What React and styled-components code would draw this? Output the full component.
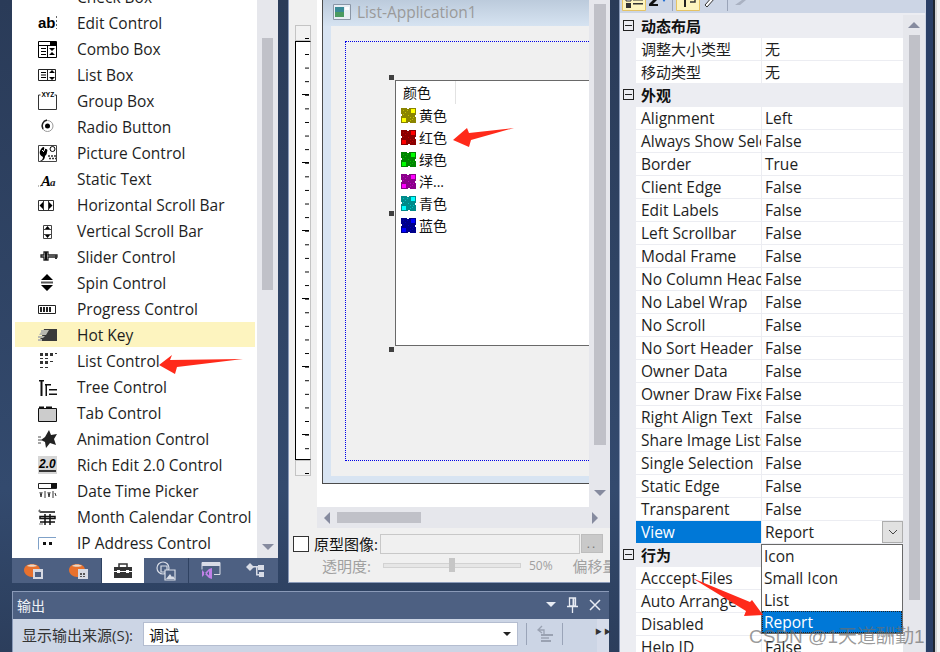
import React from "react";
import styled, { createGlobalStyle } from "styled-components";

const FONT = `"Open Sans", "Noto Sans CJK SC", sans-serif`;

const GlobalStyle = createGlobalStyle`
  html, body {
    margin: 0;
    padding: 0;
    background: #2b3c5a;
  }
  * {
    box-sizing: border-box;
  }
`;

const Page = styled.div`
  position: relative;
  display: flex;
  width: 940px;
  height: 652px;
  overflow: hidden;
  padding-left: 12px;
  font-family: ${FONT};
  font-size: 15.5px;
  color: #1e1e1e;
  background: linear-gradient(180deg, #2a3b58 0%, #334a6e 75%, #2c3e5c 100%);
`;

const MainCol = styled.div`
  display: flex;
  flex-direction: column;
  width: 598px;
  flex: none;
`;

const TopRow = styled.div`
  display: flex;
  gap: 10px;
  height: 583px;
  flex: none;
`;

/* toolbox */
const Toolbox = styled.div`
  display: flex;
  flex-direction: column;
  width: 266px;
  flex: none;
`;

const ToolArea = styled.div`
  display: flex;
  height: 558px;
  flex: none;
  background: #fff;
  overflow: hidden;
`;

const ToolList = styled.div`
  width: 245px;
  flex: none;
  margin-top: -16px;
`;

const ToolRow = styled.div`
  display: flex;
  align-items: center;
  height: 26px;
  margin-left: 3px;
  margin-right: 2px;
  padding-left: 23px;
  background: ${(p) => (p.$hot ? "#fdf4bf" : "transparent")};
  border-bottom: 1px solid ${(p) => (p.$hot ? "#fff" : "transparent")};
`;

const ToolLabel = styled.span`
  margin-left: 19px;
  margin-top: 1px;
  white-space: nowrap;
`;

const ScrollTrack = styled.div`
  display: flex;
  flex-direction: column;
  align-items: center;
  width: ${(p) => p.$w || 21}px;
  flex: none;
  background: #e6e7ec;
`;

const ToolThumb = styled.div`
  width: 11px;
  height: 252px;
  margin-top: 38px;
  background: #c0c1c8;
`;

const ArrowDown = styled.div`
  width: 0;
  height: 0;
  margin-top: ${(p) => p.$top}px;
  border-left: 6px solid transparent;
  border-right: 6px solid transparent;
  border-top: 6px solid #868b9f;
`;

const ArrowUp = styled.div`
  width: 0;
  height: 0;
  margin-top: ${(p) => p.$top}px;
  border-left: 6px solid transparent;
  border-right: 6px solid transparent;
  border-bottom: 6px solid #868b9f;
`;

const TabStrip = styled.div`
  display: flex;
  height: 25px;
  flex: none;
  background: #4d6082;
`;

const Tab = styled.div`
  display: flex;
  align-items: center;
  justify-content: center;
  width: ${(p) => p.$w}px;
  flex: none;
  background: ${(p) => (p.$active ? "#fff" : "transparent")};
  border-right: 1px solid ${(p) => (p.$line ? "#2f4262" : "transparent")};
`;

/* dialog editor */
const Editor = styled.div`
  display: flex;
  flex-direction: column;
  width: 322px;
  flex: none;
  background: #f0f0f0;
  border-left: 1px solid #8a9ab8;
  border-bottom: 1px solid #8a9ab8;
`;

const EditorBody = styled.div`
  display: flex;
  height: 507px;
  flex: none;
`;

const RulerWrap = styled.div`
  display: flex;
  flex-direction: column;
  width: 28px;
  flex: none;
  padding: 25px 6px 0 6px;
`;

const RulerEnd = styled.div`
  height: 16px;
  flex: none;
  background-color: #f2f2f2;
  background-image: linear-gradient(#000, #000);
  background-size: 4px 1px;
  background-position: 9px 12px;
  background-repeat: no-repeat;
  border: 1px solid #c4c4c4;
`;

const RulerTrack = styled.div`
  height: 419px;
  flex: none;
  background-color: #fff;
  background-image: linear-gradient(#000, #000 1px, transparent 1px),
    linear-gradient(#000, #000 1px, transparent 1px);
  background-size: 4px 13.6px, 7px 68px;
  background-position: 9px 12px, 6px 52px;
  background-repeat: repeat-y;
  border: 1px solid #000;
  border-right-color: #c4c4c4;
`;

const Canvas = styled.div`
  flex: 1;
  min-width: 0;
  overflow: hidden;
  background: #fff;
`;

const DialogFrame = styled.div`
  width: 340px;
  height: 484px;
  margin-left: 5px;
  border: 1px solid #4b4b4b;
  border-top: none;
  background: #d8e4f2;
`;

const DialogTitle = styled.div`
  display: flex;
  align-items: center;
  gap: 6px;
  height: 26px;
  padding: 0 0 3px 10px;
  background: linear-gradient(180deg, #bccbdc 0%, #d6e3f1 100%);
  color: #9a9a9a;
`;

const DialogClient = styled.div`
  height: 450px;
  margin-left: 8px;
  padding: 15px 0 0 14px;
  background: #f0f0f0;
`;

const GuideBox = styled.div`
  height: 420px;
  padding: 38px 0 0 49px;
  border: 1px dotted #0000e6;
  border-right: none;
`;

const ListCtl = styled.div`
  position: relative;
  width: 300px;
  height: 266px;
  background: #fff;
  border: 1px solid #696969;
`;

const Handle = styled.span`
  position: absolute;
  left: -7px;
  top: ${(p) => p.$top}px;
  width: 5px;
  height: 5px;
  background: #404040;
`;

const ListHead = styled.div`
  width: 60px;
  height: 23px;
  padding: 1px 0 0 7px;
  line-height: 22px;
  color: #111;
  font-size: 14px;
  border-right: 1px solid #e2e2e2;
`;

const ListItem = styled.div`
  display: flex;
  align-items: center;
  gap: 3px;
  height: 22px;
  padding-left: 4px;
  color: #111;
  font-size: 14px;
`;

const EditorV = styled(ScrollTrack)`
  width: 21px;
`;

const EditorThumb = styled.div`
  width: 12px;
  height: 441px;
  margin-top: 4px;
  background: #c0c1c8;
`;

const HBar = styled.div`
  display: flex;
  align-items: center;
  height: 21px;
  flex: none;
  margin-left: 28px;
  padding: 0 12px 0 7px;
  background: #e6e7ec;
`;

const ArrowLeft = styled.div`
  width: 0;
  height: 0;
  border-top: 6px solid transparent;
  border-bottom: 6px solid transparent;
  border-right: 6px solid #868b9f;
`;

const ArrowRight = styled.div`
  width: 0;
  height: 0;
  margin-left: auto;
  border-top: 6px solid transparent;
  border-bottom: 6px solid transparent;
  border-left: 6px solid #868b9f;
`;

const HThumb = styled.div`
  width: 84px;
  height: 11px;
  margin-left: 7px;
  background: #c0c1c8;
`;

const ProtoRow = styled.div`
  display: flex;
  align-items: center;
  height: 21px;
  margin-top: 5px;
  padding-left: 4px;
  color: #111;
  font-size: 15px;
`;

const Check = styled.span`
  width: 16px;
  height: 16px;
  flex: none;
  margin-right: 5px;
  background: #fff;
  border: 1px solid #333;
`;

const ProtoInput = styled.div`
  width: 200px;
  height: 20px;
  flex: none;
  margin-left: 2px;
  background: #f0f0f0;
  border: 1px solid #c8c8c8;
`;

const ProtoBtn = styled.div`
  width: 22px;
  height: 19px;
  flex: none;
  margin-left: 1px;
  text-align: center;
  line-height: 18px;
  color: #777;
  font-size: 12px;
  letter-spacing: 2px;
  background: #c9c9c9;
  border: 1px solid #bdbdbd;
`;

const OpacityRow = styled.div`
  display: flex;
  align-items: center;
  height: 24px;
  margin-top: -1px;
  padding-left: 33px;
  overflow: hidden;
  white-space: nowrap;
  color: #a0a0a0;
  font-size: 15px;
`;

const Slider = styled.div`
  position: relative;
  width: 138px;
  height: 5px;
  flex: none;
  margin: 0 8px 0 12px;
  background: #e6e6e6;
  border: 1px solid #d2d2d2;
`;

const SliderKnob = styled.span`
  position: absolute;
  left: 65px;
  top: -6px;
  width: 6px;
  height: 14px;
  background: #c6c6c6;
`;

const Percent = styled.span`
  font-size: 12px;
`;

const OffsetLabel = styled.span`
  margin-left: 20px;
`;

/* output */
const Output = styled.div`
  display: flex;
  flex-direction: column;
  height: 61px;
  margin: 8px 1px 0 0;
  flex: none;
  border-top: 1px solid #8a9ab8;
  border-left: 1px solid #8a9ab8;
`;

const OutputTitle = styled.div`
  display: flex;
  align-items: center;
  height: 27px;
  flex: none;
  padding: 0 8px 2px 4px;
  color: #f0f3f8;
  font-size: 14px;
  background: #4d6082;
`;

const TitleIcons = styled.div`
  display: flex;
  align-items: center;
  gap: 11px;
  margin-left: auto;
`;

const OutputBar = styled.div`
  display: flex;
  align-items: center;
  flex: 1;
  padding: 0 0 3px 9px;
  color: #333;
  font-size: 15px;
  background: #ccd5e5;
`;

const OutLabel = styled.span`
  width: 121px;
  flex: none;
  white-space: nowrap;
`;

const OutSelect = styled.div`
  display: flex;
  align-items: center;
  justify-content: space-between;
  width: 375px;
  height: 24px;
  flex: none;
  padding: 0 5px;
  color: #111;
  background: #fff;
  border: 1px solid #b4bdd0;
`;

const SmallCaret = styled.span`
  width: 0;
  height: 0;
  margin-right: 1px;
  border-left: 4px solid transparent;
  border-right: 4px solid transparent;
  border-top: 4px solid #222;
`;

const BarSep = styled.span`
  width: 1px;
  height: 22px;
  flex: none;
  margin-left: ${(p) => p.$left}px;
  background: #9aa4b8;
`;

const Grip = styled.div`
  display: flex;
  justify-content: center;
  gap: 2px;
  width: 12px;
  align-self: stretch;
  flex: none;
  margin: 0 0 -3px auto;
  padding-top: 7px;
  color: #333;
  font-size: 7px;
  background: #d6dcea;
`;

/* properties */
const Props = styled.div`
  display: flex;
  flex-direction: column;
  width: 306px;
  flex: none;
  margin-left: 9px;
  border-left: 1px solid #8a9ab8;
  background: #ecedf2;
`;

const PropsBar = styled.div`
  display: flex;
  align-items: flex-end;
  height: 13px;
  flex: none;
  margin-bottom: 2px;
  padding-bottom: 2px;
  overflow: hidden;
  background: #ccd5e5;
`;

const PropsBody = styled.div`
  display: flex;
  flex: 1;
  min-height: 0;
`;

const PropsGrid = styled.div`
  position: relative;
  width: 283px;
  flex: none;
`;

const CatRow = styled.div`
  display: flex;
  align-items: center;
  height: 23px;
  padding: 0 0 3px 3px;
  color: #111;
  font-weight: 700;
  font-size: 15px;
`;

const Expander = styled.span`
  position: relative;
  width: 11px;
  height: 11px;
  flex: none;
  margin-right: 7px;
  border: 1px solid #222;
  &::after {
    content: "";
    position: absolute;
    left: 1px;
    right: 1px;
    top: 4px;
    height: 1px;
    background: #222;
  }
`;

const PropRow = styled.div`
  display: flex;
  height: 23px;
  padding: 0 0 1px 16px;
  white-space: nowrap;
  font-size: ${(p) => (p.$cn ? "15px" : "inherit")};
`;

const PropName = styled.div`
  width: 125px;
  flex: none;
  overflow: hidden;
  padding-left: 5px;
  line-height: 22px;
  color: ${(p) => (p.$selected ? "#fff" : "#1e1e1e")};
  background: ${(p) => (p.$selected ? "#0078d7" : "#fff")};
`;

const PropValue = styled.div`
  display: flex;
  justify-content: space-between;
  flex: 1;
  margin-left: 1px;
  padding-left: 3px;
  line-height: 22px;
  background: #fff;
`;

const ComboBtn = styled.div`
  display: flex;
  align-items: center;
  justify-content: center;
  width: 21px;
  height: 22px;
  flex: none;
  background: #e1e1e1;
  border: 1px solid #adadad;
`;

const Dropdown = styled.div`
  position: absolute;
  left: 141px;
  top: 529px;
  width: 142px;
  height: 90px;
  background: #fff;
  border: 1px solid #696969;
`;

const DropItem = styled.div`
  height: 22px;
  padding-left: 2px;
  line-height: 22px;
  color: ${(p) => (p.$selected ? "#fff" : "#1e1e1e")};
  background: ${(p) => (p.$selected ? "#0078d7" : "#fff")};
  outline: ${(p) => (p.$selected ? "1px dotted #222" : "none")};
  outline-offset: -1px;
`;

const PropScroll = styled(ScrollTrack)`
  width: 22px;
`;

const PropThumb = styled.div`
  width: 11px;
  height: 565px;
  margin-top: 7px;
  background: #c0c1c8;
`;

const RightEdge = styled.div`
  display: flex;
  width: 15px;
  flex: none;
`;

const EdgeBand = styled.div`
  width: ${(p) => p.$w}px;
  flex: none;
  background: ${(p) => p.$c};
`;

const Overlay = styled.svg`
  position: absolute;
  left: 0;
  top: 0;
  pointer-events: none;
`;

const Watermark = styled.div`
  position: absolute;
  left: 749px;
  top: 621px;
  white-space: nowrap;
  color: rgba(110, 110, 110, 0.7);
  font-family: "Liberation Sans", "Noto Sans CJK SC", sans-serif;
  font-size: 19px;
`;

/* small black toolbox glyphs, 20x20 */
const glyphs = {
  check: (
    <path d="M3 0h14v5h-14z M5 0l3 3M15 0l-3 3" fill="#444" stroke="#000" />
  ),
  edit: (
    <>
      <text x="0" y="15" fontFamily="Liberation Sans" fontWeight="700" fontSize="15" fill="#000">ab</text>
      <path d="M18.5 3v13" stroke="#666" strokeDasharray="2 2" />
    </>
  ),
  combo: (
    <>
      <path d="M.5 2.5h18v16h-18zM.5 6.5h18M9.5 6.5v12M12.5 2.5v4" fill="none" stroke="#000" />
      <path d="M13 3h5v3h-5zM3 9h5v1H3zM3 12h5v1H3zM3 15h5v1H3zM11 9h6l-3 3zM11 16h6l-3-3z" fill="#000" />
    </>
  ),
  listbox: (
    <>
      <path d="M.5 4.5h17v11H.5zM9.5 4.5v11" fill="none" stroke="#222" />
      <path d="M3 7h5v1H3zM3 9.500h5v1H3zM3 12h5v1H3zM11 8h6l-3-3zM11 12h6l-3 3z" fill="#000" />
    </>
  ),
  group: (
    <>
      <path d="M.5 4v14.500h18V4M.5 4h2M16.500 4h2" fill="none" stroke="#333" />
      <text x="3.500" y="6" fontFamily="Liberation Sans" fontWeight="700" fontSize="6.500" fill="#000">XYZ</text>
    </>
  ),
  radio: (
    <>
      <circle cx="9.500" cy="9" r="5.500" fill="none" stroke="#999" />
      <path d="M5 12a6 6 0 0 1 4-9" fill="none" stroke="#222" strokeWidth="1.500" />
      <circle cx="9.500" cy="9" r="2.500" fill="#000" />
    </>
  ),
  picture: (
    <>
      <path d="M.5 2.500h18v16H.5z" fill="#fff" stroke="#444" />
      <path d="M2 18c2-1 3-2 3-4-2-1-4-3-3-6 1-2 2-4 4-4 0 1 1 2 2 2s2 1 1 3c0 2-1 3-2 4 0 3-2 5-5 5z" fill="#000" />
      <path d="M4 7l2 2M7 5l-1 3" stroke="#fff" />
      <circle cx="14.500" cy="6" r="2.500" fill="none" stroke="#000" />
      <path d="M10 13h8M11 15.500h7" stroke="#333" strokeWidth="1.500" strokeDasharray="2 1" />
    </>
  ),
  statictext: (
    <>
      <path d="M0 17h4" stroke="#777" strokeDasharray="1 1" />
      <text x="3" y="17" fontFamily="Liberation Serif" fontWeight="700" fontStyle="italic" fontSize="15" fill="#000">A</text>
      <text x="12" y="17" fontFamily="Liberation Serif" fontWeight="700" fontStyle="italic" fontSize="11" fill="#222">a</text>
    </>
  ),
  hscroll: (
    <>
      <path d="M.5 5.500h15v10H.5zM5.500 5.500v10M10.500 5.500v10" fill="none" stroke="#333" />
      <path d="M5 7v7L1.500 10.500zM11 7v7l3.500-3.500z" fill="#000" />
    </>
  ),
  vscroll: (
    <>
      <path d="M5.500 4.500h8v13h-8zM5.500 8.500h8M5.500 13.500h8" fill="none" stroke="#444" />
      <path d="M7 8h5L9.500 5zM7 14h5l-2.500 3z" fill="#000" />
    </>
  ),
  slider: (
    <>
      <path d="M3 8h3V5h4v3h9v2h-9v3H6v-3H3z" fill="#fff" stroke="#222" strokeWidth="1.300" />
      <path d="M7 5h2v8H7z" fill="#111" />
      <path d="M17 8h2v4h-2z" fill="#333" />
    </>
  ),
  spin: (
    <>
      <path d="M3 7l6-6 6 6zM3 12l6 6 6-6z" fill="#000" />
      <path d="M3 8.500h12v2H3z" fill="#555" />
    </>
  ),
  progress: (
    <>
      <path d="M.5 6.500h17v8H.5z" fill="#fff" stroke="#222" />
      <path d="M2 8h2v5H2zM5 8h2v5H5zM8 8h2v5H8zM11 8h2v5h-2z" fill="#222" />
    </>
  ),
  hotkey: (
    <>
      <path d="M6 4h13v12H1l3-5z" fill="#3a3a3a" />
      <path d="M3 5h8l-3 5H1l2-3zM0 11h7l-2 2H0zM0 14h4v2H0z" fill="#b8b8b0" />
    </>
  ),
  listctl: (
    <path d="M2 2h3v3H2zM7 2h3v3H7zM12 2h3v3h-3zM17 2h2v1h-2zM2 7h3v1H2zM7 7h3v1H7zM2 10h3v3H2zM7 10h3v3H7zM12 10h3v1h-3zM2 16h3v1H2zM7 16h3v1H7z" fill="#333" />
  ),
  tree: (
    <>
      <path d="M1 3h5v1.500H1zM2.500 4h2v15h-2zM7 7h6v1.500H7zM7.500 8h1.500v11H7.500z" fill="#111" />
      <path d="M11 12h8v1.500h-8zM11 16.500h8V18h-8z" fill="#111" />
    </>
  ),
  tab: (
    <>
      <path d="M.5 5.500h18v13H.5z" fill="#ccc" stroke="#111" />
      <path d="M1 3.500h5v2H1zM8 3.500h6v2H8z" fill="#111" />
    </>
  ),
  anim: (
    <>
      <path d="M11 1l2 5 6-1-3 5 2 6-6-2-4 5-1-6-4-2 4-3z" fill="#222" />
      <path d="M0 8h3M0 11h4M0 14h3" stroke="#888" strokeWidth="1.300" />
    </>
  ),
  rich: (
    <>
      <path d="M0 1h19v18H0z" fill="#d6d6d6" />
      <text x="1" y="13" fontFamily="Liberation Sans" fontWeight="700" fontStyle="italic" fontSize="12" fill="#000">2.0</text>
      <path d="M1 16h17" stroke="#000" strokeWidth="1.500" />
    </>
  ),
  date: (
    <>
      <path d="M.5 2.500h18v5H.5z" fill="#fff" stroke="#222" />
      <path d="M13 2h6v5h-6z" fill="#111" />
      <path d="M2 11l1 5 1-5M7 10v7M10 11l1 5 1-5M15 10v7M17 12l1 3" fill="none" stroke="#333" />
    </>
  ),
  month: (
    <>
      <path d="M2 5h15M2 9.500h15v2H2zM2 15h15M7 7v11M12 7v11" fill="none" stroke="#111" strokeWidth="1.500" />
      <path d="M1 3h1v2H1zM1 17h4" stroke="#777" />
    </>
  ),
  ip: (
    <>
      <path d="M.5 4.500H18M.5 4.500v12" fill="none" stroke="#7fa1c8" />
      <path d="M5 9h3v3H5zM11 9h3v3h-3z" fill="#111" />
    </>
  ),
};

const TOOLS = [
  ["check", "Check Box"],
  ["edit", "Edit Control"],
  ["combo", "Combo Box"],
  ["listbox", "List Box"],
  ["group", "Group Box"],
  ["radio", "Radio Button"],
  ["picture", "Picture Control"],
  ["statictext", "Static Text"],
  ["hscroll", "Horizontal Scroll Bar"],
  ["vscroll", "Vertical Scroll Bar"],
  ["slider", "Slider Control"],
  ["spin", "Spin Control"],
  ["progress", "Progress Control"],
  ["hotkey", "Hot Key"],
  ["listctl", "List Control"],
  ["tree", "Tree Control"],
  ["tab", "Tab Control"],
  ["anim", "Animation Control"],
  ["rich", "Rich Edit 2.0 Control"],
  ["date", "Date Time Picker"],
  ["month", "Month Calendar Control"],
  ["ip", "IP Address Control"],
];

function Tomato({ children }) {
  return (
    <svg width="22" height="20" viewBox="0 0 22 20">
      <path d="M1 9c0-4 4-6 8-6 4 0 8 2 8 6 0 5-4 7-8 7-4 0-8-3-8-7z" fill="#e8712d" />
      <path d="M4 5c2-2 8-2 10 0-2 1-8 1-10 0z" fill="#e8d8c8" />
      <path d="M10 8h10v10H10z" fill="#d6d9e2" />
      {children}
    </svg>
  );
}

function ColorIcon({ dark, light }) {
  return (
    <svg width="16" height="16" viewBox="0 0 16 16" shapeRendering="crispEdges">
      <rect x="1" y="1" width="15" height="15" fill={dark} />
      <rect x="7" y="1" width="2" height="1" fill="#fff" />
      <rect x="1" y="7" width="1" height="2" fill="#fff" />
      <rect x="15" y="8" width="1" height="2" fill="#fff" />
      <rect x="8" y="15" width="2" height="1" fill="#fff" />
      <rect x="11" y="2" width="4" height="4" fill={light} />
      <rect x="2" y="11" width="4" height="4" fill={light} />
      <path d="M3 3h1v1H3zM5 5h1v1H5zM7 3h1v1H7zM3 7h1v1H3zM8 8h1v1H8zM10 10h1v1h-1zM12 12h1v1h-1zM10 13h1v1h-1zM13 10h1v1h-1z" fill={light} opacity="0.45" />
    </svg>
  );
}

const ROWS = [
  ["黄色", "#8a8400", "#ffff00"],
  ["红色", "#8a0000", "#ff0000"],
  ["绿色", "#008400", "#00ff00"],
  ["洋...", "#8a008a", "#ff00ff"],
  ["青色", "#008a8a", "#00ffff"],
  ["蓝色", "#00008a", "#0000ff"],
];

const LOOK = [
  ["Alignment", "Left"],
  ["Always Show Selection", "False"],
  ["Border", "True"],
  ["Client Edge", "False"],
  ["Edit Labels", "False"],
  ["Left Scrollbar", "False"],
  ["Modal Frame", "False"],
  ["No Column Header", "False"],
  ["No Label Wrap", "False"],
  ["No Scroll", "False"],
  ["No Sort Header", "False"],
  ["Owner Data", "False"],
  ["Owner Draw Fixed", "False"],
  ["Right Align Text", "False"],
  ["Share Image Lists", "False"],
  ["Single Selection", "False"],
  ["Static Edge", "False"],
  ["Transparent", "False"],
];

// the values of the middle rows sit behind the open dropdown
const ACTIONS = [
  ["Acccept Files", ""],
  ["Auto Arrange", ""],
  ["Disabled", ""],
  ["Help ID", "False"],
];

export default function App() {
  return (
    <Page>
      <GlobalStyle />
      <MainCol>
        <TopRow>
          <Toolbox>
            <ToolArea>
              <ToolList>
                {TOOLS.map(([id, label]) => (
                  <ToolRow key={id} $hot={id === "hotkey"}>
                    <svg width="20" height="20" viewBox="0 0 20 20">{glyphs[id]}</svg>
                    <ToolLabel>{label}</ToolLabel>
                  </ToolRow>
                ))}
              </ToolList>
              <ScrollTrack>
                <ToolThumb />
                <ArrowDown $top={254} />
              </ScrollTrack>
            </ToolArea>
            <TabStrip>
              <Tab $w={45}>
                <Tomato><path d="M12 11h6v5h-6z" fill="#4d6082" /></Tomato>
              </Tab>
              <Tab $w={45} $line>
                <Tomato><path d="M12 12h2v2h-2zM15 12h2v2h-2zM12 15h2v1h-2zM15 15h2v1h-2z" fill="#555" /></Tomato>
              </Tab>
              <Tab $w={42} $active>
                <svg width="20" height="16" viewBox="0 0 20 16">
                  <path d="M6 4V1h8v3" fill="none" stroke="#333" strokeWidth="1.500" />
                  <path d="M1 4h18v4H1zM1 9h18v6H1z" fill="#333" />
                  <path d="M4 7h3v3H4zM13 7h3v3h-3z" fill="#fff" />
                </svg>
              </Tab>
              <Tab $w={45} $line>
                <svg width="20" height="20" viewBox="0 0 20 20" fill="none" stroke="#d8dce6" strokeWidth="1.200">
                  <circle cx="7" cy="7" r="6" />
                  <path d="M5 5h6v6H5z" />
                  <path d="M9 9h10v10H9z" fill="#4d6082" />
                  <path d="M10 18l4-5 2 3 1-1 2 3z" fill="#d8dce6" stroke="none" />
                </svg>
              </Tab>
              <Tab $w={44}>
                <svg width="20" height="18" viewBox="0 0 20 18">
                  <path d="M1 .500h18v12h-6M1 .500v7" fill="none" stroke="#d8dce6" />
                  <path d="M1 1h18v3H1z" fill="#d8dce6" />
                  <path d="M1 8l3 3 4-4 3-1v11l-3-1-4-4-3 3zM3 10l2 1.500L3 13zM8 9l-2 2.500 2 2z" fill="#c080e8" fillRule="evenodd" />
                </svg>
              </Tab>
              <Tab $w={45}>
                <svg width="20" height="18" viewBox="0 0 20 18" fill="#d8dce6">
                  <path d="M5 1l4 4-4 4-4-4z" />
                  <path d="M8 4h5v1.500H8zM11 4h1.500v9H11zM11 12h3v1.500h-3z" />
                  <path d="M13 3h6v5h-6zM14 10h5v5h-5z" />
                </svg>
              </Tab>
            </TabStrip>
          </Toolbox>

          <Editor>
            <EditorBody>
              <RulerWrap>
                <RulerEnd />
                <RulerTrack />
                <RulerEnd />
              </RulerWrap>
              <Canvas>
                <DialogFrame>
                  <DialogTitle>
                    <svg width="18" height="16" viewBox="0 0 18 16">
                      <path d="M.500 .500h17v15H.500z" fill="#e8eef4" stroke="#8a96a6" />
                      <path d="M2 3h9v10H2z" fill="#3a8a96" />
                      <path d="M2 8h9v5H2z" fill="#4a9a60" />
                      <path d="M12 3h4v3h-4z" fill="#fff" />
                    </svg>
                    List-Application1
                  </DialogTitle>
                  <DialogClient>
                    <GuideBox>
                      <ListCtl>
                        <Handle $top={-6} />
                        <Handle $top={130} />
                        <Handle $top={266} />
                        <ListHead>颜色</ListHead>
                        {ROWS.map(([name, dark, light]) => (
                          <ListItem key={name}>
                            <ColorIcon dark={dark} light={light} />
                            {name}
                          </ListItem>
                        ))}
                      </ListCtl>
                    </GuideBox>
                  </DialogClient>
                </DialogFrame>
              </Canvas>
              <EditorV>
                <EditorThumb />
                <ArrowDown $top={45} />
              </EditorV>
            </EditorBody>
            <HBar>
              <ArrowLeft />
              <HThumb />
              <ArrowRight />
            </HBar>
            <ProtoRow>
              <Check />
              原型图像:
              <ProtoInput />
              <ProtoBtn>..</ProtoBtn>
            </ProtoRow>
            <OpacityRow>
              透明度:
              <Slider>
                <SliderKnob />
              </Slider>
              <Percent>50%</Percent>
              <OffsetLabel>偏移量</OffsetLabel>
            </OpacityRow>
          </Editor>
        </TopRow>

        <Output>
          <OutputTitle>
            输出
            <TitleIcons>
              <svg width="10" height="6" viewBox="0 0 10 6"><path d="M0 0h10L5 5z" fill="#e8ecf4" /></svg>
              <svg width="11" height="16" viewBox="0 0 11 16" fill="none" stroke="#e8ecf4" strokeWidth="1.300">
                <path d="M2.500 1h6v8h-6zM0 9.500h11M5.500 10v6" />
                <path d="M6.500 1v8" strokeWidth="2" />
              </svg>
              <svg width="12" height="12" viewBox="0 0 12 12" stroke="#e8ecf4" strokeWidth="1.500">
                <path d="M1 1l10 10M11 1L1 11" />
              </svg>
            </TitleIcons>
          </OutputTitle>
          <OutputBar>
            <OutLabel>显示输出来源(S):</OutLabel>
            <OutSelect>
              调试
              <SmallCaret />
            </OutSelect>
            <BarSep $left={8} />
            <svg width="18" height="18" viewBox="0 0 18 18" style={{ marginLeft: 9 }}>
              <path d="M6 1L2 5l4 3M2 5h6v6" fill="none" stroke="#9aa2b2" strokeWidth="1.300" />
              <path d="M5 9h12v2H5zM5 15h10v2H5z" fill="#9aa2b2" />
              <path d="M5 12h8v2H5z" fill="#a8b0c0" />
            </svg>
            <BarSep $left={8} />
            <Grip>
              <span>▶</span>
              <span>▶</span>
            </Grip>
          </OutputBar>
        </Output>
      </MainCol>

      <Props>
        <PropsBar>
          <svg width="150" height="18" viewBox="0 0 150 18">
            <path d="M2.500 .500h23v17h-23z" fill="#fdf4bf" stroke="#e5c365" />
            <path d="M6 3h5v5H6zM13 3h10v1.500H13zM13 6h10v1.500H13zM6 10h5v5H6zM13 10h10v1.500H13z" fill="#333" />
            <path d="M6 3h5v5H6z" fill="#fff" stroke="#333" />
            <path d="M30 4h8v2l-5 5h5v2h-9v-2l5-5h-4z" fill="#111" />
            <path d="M40 3h8l-4 6z" fill="#1a6ad0" />
            <path d="M52 0h1v18h-1z" fill="#9aa4b8" />
            <path d="M56.500 .500h23v17h-23z" fill="#fdf4bf" stroke="#e5c365" />
            <path d="M61 2h8v3h-3v9h-2V5h-3z" fill="#222" />
            <path d="M70 9h5V2" fill="none" stroke="#333" strokeWidth="1.500" />
            <path d="M85 12l8-9 2 2-8 9z" fill="#fff" stroke="#333" />
            <path d="M90 0l1 3 3-1-1 3z" fill="#e5b000" />
            <path d="M107 0h1v18h-1z" fill="#9aa4b8" />
            <path d="M115 12l7-5 3-5 3-2 1 3-3 4-6 5z" fill="#aab2c2" />
          </svg>
        </PropsBar>
        <PropsBody>
          <PropsGrid>
            <CatRow><Expander />动态布局</CatRow>
            <PropRow $cn><PropName>调整大小类型</PropName><PropValue>无</PropValue></PropRow>
            <PropRow $cn><PropName>移动类型</PropName><PropValue>无</PropValue></PropRow>
            <CatRow><Expander />外观</CatRow>
            {LOOK.map(([name, value]) => (
              <PropRow key={name}>
                <PropName>{name}</PropName>
                <PropValue>{value}</PropValue>
              </PropRow>
            ))}
            <PropRow>
              <PropName $selected>View</PropName>
              <PropValue>
                Report
                <ComboBtn>
                  <svg width="10" height="6" viewBox="0 0 10 6" fill="none" stroke="#444">
                    <path d="M1 1l4 4 4-4" />
                  </svg>
                </ComboBtn>
              </PropValue>
            </PropRow>
            <CatRow><Expander />行为</CatRow>
            {ACTIONS.map(([name, value]) => (
              <PropRow key={name}>
                <PropName>{name}</PropName>
                <PropValue>{value}</PropValue>
              </PropRow>
            ))}
            <Dropdown>
              <DropItem>Icon</DropItem>
              <DropItem>Small Icon</DropItem>
              <DropItem>List</DropItem>
              <DropItem $selected>Report</DropItem>
            </Dropdown>
          </PropsGrid>
          <PropScroll>
            <ArrowUp $top={7} />
            <PropThumb />
          </PropScroll>
        </PropsBody>
      </Props>

      <RightEdge>
        <EdgeBand $w={1} $c="#cfd6e4" />
        <EdgeBand $w={7} $c="#2a3f66" />
        <EdgeBand $w={2} $c="#1f2630" />
        <EdgeBand $w={2} $c="#d4d4d4" />
        <EdgeBand $w={3} $c="#f2f2f2" />
      </RightEdge>

      <Overlay width="940" height="652" viewBox="0 0 940 652">
        <path d="M159 365L172 355 170 360 243 359 177 367 175 374z" fill="#ff2a1a" />
        <path d="M453 140L467 128 469 133 514 128 471 140 469 147z" fill="#ff2a1a" />
        <path d="M692 578L750 602 752 600 763 615 744 616 746 611z" fill="#ff2a1a" />
      </Overlay>
      <Watermark>CSDN @1天道酬勤1</Watermark>
    </Page>
  );
}
